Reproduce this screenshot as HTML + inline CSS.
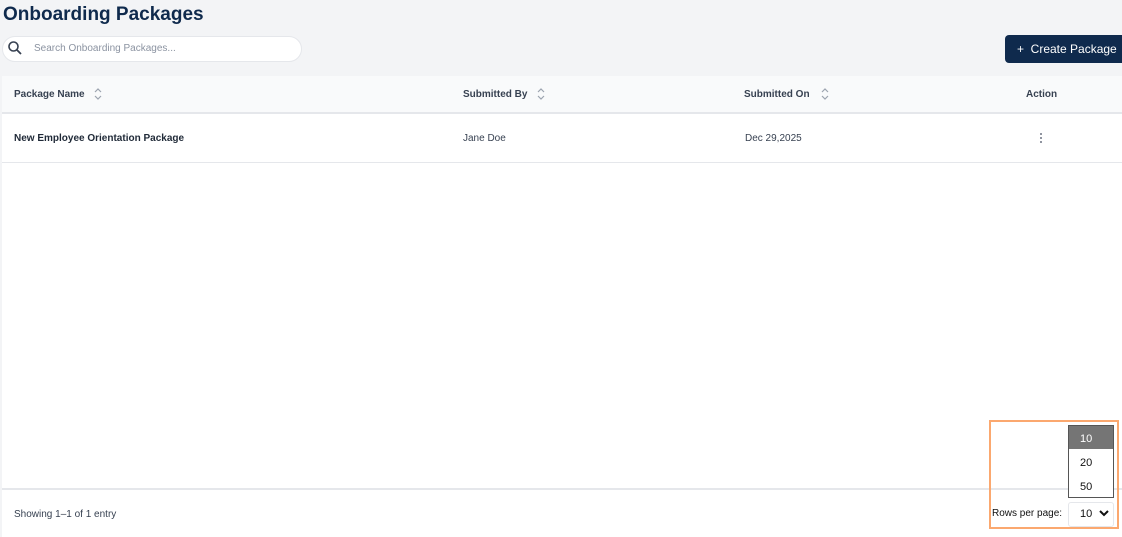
<!DOCTYPE html><html><head><style>
body{margin:0;width:1122px;height:537px;background:#f3f4f6;font-family:"Liberation Sans",sans-serif;position:relative;overflow:hidden}
.a{position:absolute}
h1{position:absolute;left:3px;top:4px;margin:0;font-size:19px;font-weight:bold;color:#0f2a4d}
.t{font-size:10px;color:#374151}
.b{font-weight:bold;color:#1f2937}
</style></head><body>
<h1>Onboarding Packages</h1>
<div class="a" style="left:2px;top:36px;width:298px;height:24px;border:1px solid #e5e7eb;border-radius:13px;background:#fff"></div>
<svg class="a" style="left:7px;top:40px" width="16" height="16" viewBox="0 0 16 16"><circle cx="6.5" cy="6.5" r="4.5" fill="none" stroke="#374151" stroke-width="1.6"/><path d="M10 10l4 4" stroke="#374151" stroke-width="1.8"/></svg>
<div class="a" style="left:34px;top:43px;font-size:10px;color:#8b93a1">Search Onboarding Packages...</div>
<div class="a" style="left:1005px;top:35px;width:125px;height:28px;background:#0f2a4d;border-radius:4px;color:#fff;font-size:12px;line-height:29px;padding-left:12px;box-sizing:border-box">+&nbsp; Create Package</div>
<div class="a" style="left:2px;top:76px;width:1120px;height:461px;background:#fff"></div>
<div class="a" style="left:2px;top:76px;width:1120px;height:36px;background:#f9fafb;border-bottom:2px solid #e5e7eb"></div>
<div class="a t" style="left:14px;top:89px;font-weight:600;color:#374151">Package Name</div>
<div class="a t" style="left:463px;top:89px;color:#374151;font-weight:600">Submitted By</div>
<div class="a t" style="left:744px;top:89px;color:#374151;font-weight:600">Submitted On</div>
<div class="a t" style="left:1026px;top:89px;color:#374151;font-weight:600">Action</div>
<svg class="a" style="left:93px;top:86px" width="10" height="16"><path d="M2 6l3-3 3 3M2 10l3 3 3-3" fill="none" stroke="#9ca3af" stroke-width="1.2"/></svg>
<svg class="a" style="left:536px;top:86px" width="10" height="16"><path d="M2 6l3-3 3 3M2 10l3 3 3-3" fill="none" stroke="#9ca3af" stroke-width="1.2"/></svg>
<svg class="a" style="left:820px;top:86px" width="10" height="16"><path d="M2 6l3-3 3 3M2 10l3 3 3-3" fill="none" stroke="#9ca3af" stroke-width="1.2"/></svg>
<div class="a" style="left:2px;top:162px;width:1120px;height:1px;background:#e5e7eb"></div>
<div class="a t b" style="left:14px;top:133px">New Employee Orientation Package</div>
<div class="a t" style="left:463px;top:133px">Jane Doe</div>
<div class="a t" style="left:745px;top:133px">Dec 29,2025</div>
<div class="a" style="left:1040px;top:132px;width:2px;height:12px;background:radial-gradient(circle,#6b7280 1px,transparent 1px) 0 0/2px 4px"></div>
<div class="a" style="left:2px;top:488px;width:1120px;height:2px;background:#e5e7eb"></div>
<div class="a t" style="left:14px;top:509px">Showing 1–1 of 1 entry</div>
<div class="a" style="left:989px;top:420px;width:126px;height:105px;border:2px solid #fba86f"></div>
<div class="a" style="left:1068px;top:425px;width:44px;height:71px;border:1px solid #555;background:#fff"></div>
<div class="a" style="left:1069px;top:426px;width:44px;height:23px;background:#757575"></div>
<div class="a" style="left:1080px;top:433px;font-size:11px;color:#fff">10</div>
<div class="a" style="left:1080px;top:457px;font-size:11px;color:#111">20</div>
<div class="a" style="left:1080px;top:481px;font-size:11px;color:#111">50</div>
<div class="a" style="left:992px;top:508px;font-size:10px;color:#111">Rows per page:</div>
<div class="a" style="left:1068px;top:502px;width:44px;height:23px;border:1px solid #e5e7eb;border-radius:3px;background:#fff"></div>
<div class="a" style="left:1080px;top:508px;font-size:11px;color:#111">10</div>
<svg class="a" style="left:1099px;top:509px" width="10" height="8"><path d="M1 2l4 4 4-4" fill="none" stroke="#111" stroke-width="2"/></svg>
</body></html>
